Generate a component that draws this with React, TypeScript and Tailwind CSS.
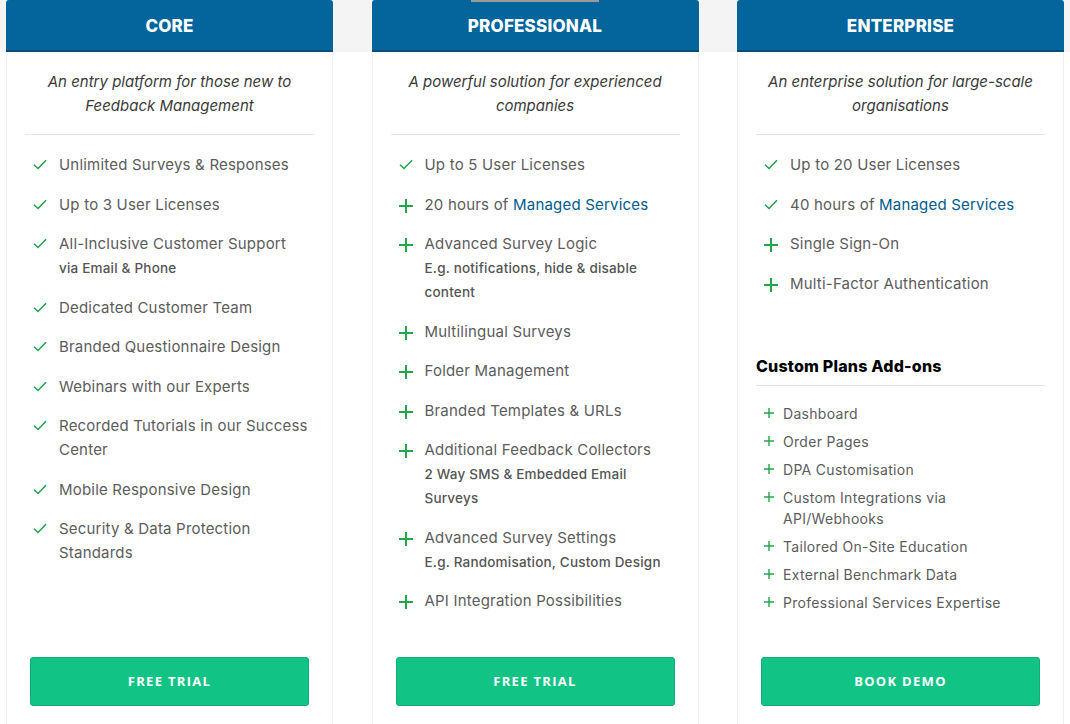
import React from "react";

type Item = { text: React.ReactNode; sub?: string; icon: "check" | "plus" };

const Check = () => (
  <svg width="14" height="11" viewBox="0 0 14 11" className="block">
    <path d="M1 5.8 L5 9.5 L13 1.2" fill="none" stroke="#1d9f48" strokeWidth="1.4" />
  </svg>
);

const Plus = ({ size = 14, w = 2 }: { size?: number; w?: number }) => (
  <svg width={size} height={size} viewBox={`0 0 ${size} ${size}`} className="block">
    <path
      d={`M${size / 2} 0 V${size} M0 ${size / 2} H${size}`}
      fill="none"
      stroke="#25a64c"
      strokeWidth={w}
    />
  </svg>
);

const Managed = () => <span className="text-[#005b8e]">Managed Services</span>;

const core: Item[] = [
  { text: "Unlimited Surveys & Responses", icon: "check" },
  { text: "Up to 3 User Licenses", icon: "check" },
  { text: "All-Inclusive Customer Support", sub: "via Email & Phone", icon: "check" },
  { text: "Dedicated Customer Team", icon: "check" },
  { text: "Branded Questionnaire Design", icon: "check" },
  { text: "Webinars with our Experts", icon: "check" },
  { text: "Recorded Tutorials in our Success Center", icon: "check" },
  { text: "Mobile Responsive Design", icon: "check" },
  { text: "Security & Data Protection Standards", icon: "check" },
];

const pro: Item[] = [
  { text: "Up to 5 User Licenses", icon: "check" },
  { text: <>20 hours of <Managed /></>, icon: "plus" },
  { text: "Advanced Survey Logic", sub: "E.g. notifications, hide & disable content", icon: "plus" },
  { text: "Multilingual Surveys", icon: "plus" },
  { text: "Folder Management", icon: "plus" },
  { text: "Branded Templates & URLs", icon: "plus" },
  { text: "Additional Feedback Collectors", sub: "2 Way SMS & Embedded Email Surveys", icon: "plus" },
  { text: "Advanced Survey Settings", sub: "E.g. Randomisation, Custom Design", icon: "plus" },
  { text: "API Integration Possibilities", icon: "plus" },
];

const ent: Item[] = [
  { text: "Up to 20 User Licenses", icon: "check" },
  { text: <>40 hours of <Managed /></>, icon: "check" },
  { text: "Single Sign-On", icon: "plus" },
  { text: "Multi-Factor Authentication", icon: "plus" },
];

const addons = [
  "Dashboard",
  "Order Pages",
  "DPA Customisation",
  "Custom Integrations via API/Webhooks",
  "Tailored On-Site Education",
  "External Benchmark Data",
  "Professional Services Expertise",
];

function FeatureList({ items }: { items: Item[] }) {
  return (
    <ul className="mt-[18px] flex flex-col gap-[15.5px]">
      {items.map((it, i) => (
        <li key={i} className="flex">
          <span className="w-[34px] shrink-0 pl-[8px] pt-[6px]">
            {it.icon === "check" ? <Check /> : <Plus />}
          </span>
          <div>
            <div className="text-[15px] leading-[24px] tracking-[0.2px] text-[#5c5c5c]">{it.text}</div>
            {it.sub && (
              <div className="text-[13.5px] leading-[24px] font-medium tracking-[0.2px] text-[#555]">
                {it.sub}
              </div>
            )}
          </div>
        </li>
      ))}
    </ul>
  );
}

function Card({
  title,
  desc,
  button,
  badge,
  children,
}: {
  title: string;
  desc: React.ReactNode;
  button: string;
  badge?: boolean;
  children: React.ReactNode;
}) {
  return (
    <div className="w-[327px] shrink-0 flex flex-col relative">
      {badge && <div className="absolute top-0 left-[99px] w-[128px] h-[2px] bg-[#9a9a9a]" />}
      <div className="h-[52px] pt-[3px] bg-[#03659c] border-b-2 border-[#0b4d78] rounded-t-[3px] flex items-center justify-center">
        <h2 className="text-white text-[17px] font-extrabold tracking-[0.2px]">{title}</h2>
      </div>
      <div className="h-[672px] bg-white border-x border-[#efefef] px-[18px] flex flex-col">
        <p className="pt-[18px] pb-[16px] border-b border-[#e6e6e6] text-center italic text-[15px] leading-[24px] text-[#3a3a3a]">
          {desc}
        </p>
        {children}
        <button className="mt-auto mb-[18px] mx-[5px] h-[49px] rounded-[3px] bg-[#12c386] border border-[#0fae77] text-white text-[13px] font-bold tracking-[1.3px] font-['Open_Sans',sans-serif]">
          {button}
        </button>
      </div>
    </div>
  );
}

export default function App() {
  return (
    <div className="h-[724px] overflow-hidden bg-[linear-gradient(#f4f4f4_0,#f4f4f4_52px,#ffffff_52px)] font-['Inter',sans-serif]">
      <div className="flex gap-[38.5px] pl-[6px]">
        <Card
          title="CORE"
          desc={<>An entry platform for those new to<br />Feedback Management</>}
          button="FREE TRIAL"
        >
          <FeatureList items={core} />
        </Card>
        <Card
          title="PROFESSIONAL"
          desc={<>A powerful solution for experienced<br />companies</>}
          button="FREE TRIAL"
          badge
        >
          <FeatureList items={pro} />
        </Card>
        <Card
          title="ENTERPRISE"
          desc={<>An enterprise solution for large-scale<br />organisations</>}
          button="BOOK DEMO"
        >
          <FeatureList items={ent} />
          <h3 className="mt-[58px] pb-[7px] border-b border-[#e6e6e6] text-[16px] leading-[24px] font-extrabold tracking-[0.2px] text-black">
            Custom Plans Add-ons
          </h3>
          <ul className="mt-[17px] flex flex-col gap-[7px]">
            {addons.map((a) => (
              <li key={a} className="flex">
                <span className="w-[27px] shrink-0 pl-[8px] pt-[5px]">
                  <Plus size={10} w={1.4} />
                </span>
                <span className="text-[14px] leading-[21px] tracking-[0.3px] text-[#5c5c5c] w-[220px]">{a}</span>
              </li>
            ))}
          </ul>
        </Card>
      </div>
    </div>
  );
}
